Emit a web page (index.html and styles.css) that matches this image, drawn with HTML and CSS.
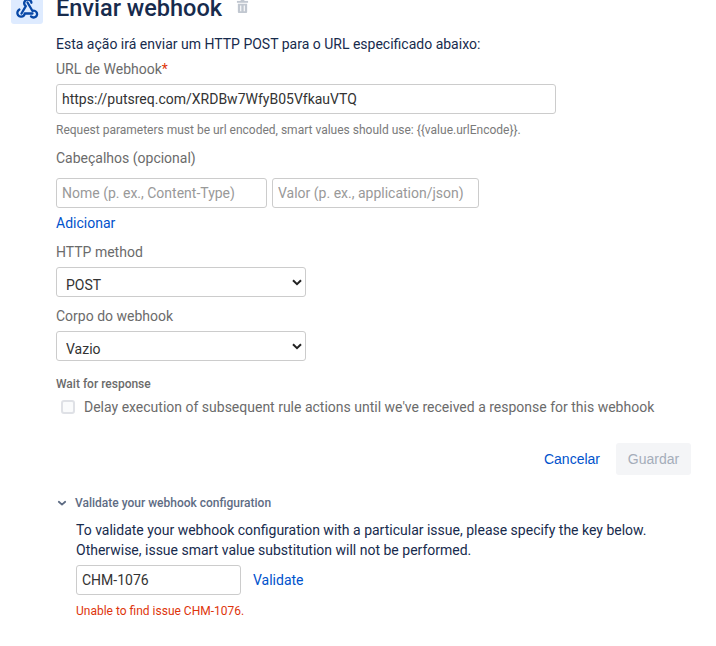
FILE: index.html

```html
<!DOCTYPE html>
<html lang="pt">
<head>
  <meta charset="UTF-8" />
  <title>Enviar webhook</title>
  <link rel="stylesheet" href="styles.css">
</head>
<body>
  <div class="page">
    <header class="title-row">
      <div class="icon-box">
        <svg width="24" height="24" viewBox="0 0 24 24" fill="none" stroke="#0747a6" stroke-width="2.3" stroke-linecap="round" stroke-linejoin="round">
          <path d="M6.500 17.500 10.800 10.200C9.200 8.800 8.800 6.600 10 5c1.400-1.800 4.200-1.900 5.600-.2.500.6.800 1.300.8 2"/>
          <path d="M12.500 6.500 17.500 15c1.600-.6 3.600.1 4.300 1.700.9 2-.3 4.300-2.400 4.700-1.300.3-2.500-.1-3.400-1"/>
          <path d="M17.500 17.500H9.800c-.4 1.800-2 3.300-4 3.100C3.600 20.400 2 18.500 2.400 16.300c.2-1.200 1-2.200 2-2.800"/>
        </svg>
      </div>
      <h1>Enviar webhook</h1>
      <svg class="trash" width="13" height="15" viewBox="0 0 14 16" fill="#c1c7d0">
        <rect x="1" y="2" width="12" height="2"/>
        <rect x="5" y="0.500" width="4" height="2"/>
        <path d="M2 5h10v9a1 1 0 0 1-1 1H3a1 1 0 0 1-1-1zM4.500 7v6h1.200V7zm3.800 0v6h1.200V7z" fill-rule="evenodd"/>
      </svg>
    </header>

    <form class="form">
      <p class="intro">Esta ação irá enviar um HTTP POST para o URL especificado abaixo:</p>

      <label class="label url-label">URL de Webhook<span class="req">*</span></label>
      <input class="input url-input" type="text" value="https://putsreq.com/XRDBw7WfyB05VfkauVTQ">
      <p class="hint">Request parameters must be url encoded, smart values should use: {{value.urlEncode}}.</p>

      <label class="label headers-label">Cabeçalhos (opcional)</label>
      <div class="headers-row">
        <input class="input name-input" type="text" placeholder="Nome (p. ex., Content-Type)">
        <input class="input value-input" type="text" placeholder="Valor (p. ex., application/json)">
      </div>
      <a class="link add-link" href="#">Adicionar</a>

      <label class="label method-label">HTTP method</label>
      <div class="select-wrap">
        <select class="select">
          <option>POST</option>
        </select>
        <svg class="chevron" width="10" height="7" viewBox="0 0 10 7" fill="none" stroke="#222" stroke-width="2">
          <path d="M1 1.200 5 5.200 9 1.200"/>
        </svg>
      </div>

      <label class="label body-label">Corpo do webhook</label>
      <div class="select-wrap">
        <select class="select">
          <option>Vazio</option>
        </select>
        <svg class="chevron" width="10" height="7" viewBox="0 0 10 7" fill="none" stroke="#222" stroke-width="2">
          <path d="M1 1.200 5 5.200 9 1.200"/>
        </svg>
      </div>

      <div class="small-title">Wait for response</div>
      <label class="check-row">
        <span class="check"></span>
        <span>Delay execution of subsequent rule actions until we've received a response for this webhook</span>
      </label>

      <div class="actions">
        <a class="cancel" href="#">Cancelar</a>
        <button class="save" type="button" disabled>Guardar</button>
      </div>
    </form>

    <section class="validate">
      <div class="validate-head">
        <svg width="12" height="12" viewBox="0 0 12 12" fill="none" stroke="#5e6c84" stroke-width="1.800" stroke-linecap="round" stroke-linejoin="round">
          <path d="M2.800 4.800 6 7.600l3.200-2.800"/>
        </svg>
        <span>Validate your webhook configuration</span>
      </div>
      <div class="validate-body">
        <p>To validate your webhook configuration with a particular issue, please specify the key below.<br>Otherwise, issue smart value substitution will not be performed.</p>
        <div class="validate-row">
          <input class="input key-input" type="text" value="CHM-1076">
          <a class="link" href="#">Validate</a>
        </div>
        <p class="error">Unable to find issue CHM-1076.</p>
      </div>
    </section>
  </div>
</body>
</html>
```

FILE: styles.css

```css
* { margin: 0; padding: 0; box-sizing: border-box; }

html, body {
  height: 646px;
  overflow: hidden;
}

body {
  font-family: Roboto, sans-serif;
  font-size: 14px;
  color: #172b4d;
  background: #fff;
}

.page {
  margin-top: -8px;
  padding-left: 11px;
  padding-right: 25px;
}

.title-row {
  display: flex;
  align-items: center;
  height: 32px;
}

.icon-box {
  width: 32px;
  height: 32px;
  background: #deebff;
  border-radius: 3px;
  display: flex;
  align-items: center;
  justify-content: center;
  margin-right: 13px;
}

.title-row h1 {
  font-size: 23.5px;
  font-weight: 500;
  line-height: 28px;
  color: #172b4d;
  margin-top: -1px;
}

.trash {
  margin-left: 14px;
  margin-top: -3px;
}

.form {
  padding-left: 45px;
}

.intro {
  margin-top: 10px;
  line-height: 20px;
}

.label {
  display: block;
  color: #6b6b6b;
  line-height: 20px;
}

.url-label { margin-top: 5px; }
.headers-label { margin-top: 10px; }
.method-label { margin-top: 9px; }
.body-label { margin-top: 9px; }

.req { color: #de350b; }

.input {
  display: block;
  height: 30px;
  font-family: Roboto, sans-serif;
  font-size: 14px;
  color: #333;
  border: 1px solid #ccc;
  border-radius: 3px;
  padding: 0 5px;
  outline: none;
  background: #fff;
}

.input::placeholder { color: #999; }

.url-input {
  width: 500px;
  margin-top: 5px;
}

.hint {
  margin-top: 8px;
  font-size: 12px;
  line-height: 16px;
  color: #7a7a7a;
}

.headers-row {
  display: flex;
  gap: 5px;
  margin-top: 10px;
}

.name-input { width: 211px; }
.value-input { width: 207px; }

.link {
  color: #0052cc;
  text-decoration: none;
  line-height: 20px;
}

.add-link {
  display: block;
  margin-top: 5px;
}

.select-wrap {
  position: relative;
  width: 250px;
  height: 30px;
  margin-top: 5px;
}

.select {
  display: block;
  width: 250px;
  height: 30px;
  appearance: none;
  font-family: Roboto, sans-serif;
  font-size: 14px;
  color: #333;
  background: #fff;
  border: 1px solid #ccc;
  border-radius: 3px;
  padding-left: 9px;
  padding-top: 6px;
}

.chevron {
  position: absolute;
  top: 12px;
  right: 4px;
  pointer-events: none;
}

.small-title {
  margin-top: 15px;
  font-size: 12px;
  font-weight: 500;
  line-height: 16px;
  color: #6b6b6b;
}

.check-row {
  display: flex;
  align-items: center;
  margin-top: 5px;
  padding-left: 5px;
  color: #6b6b6b;
  line-height: 20px;
}

.check {
  width: 14px;
  height: 14px;
  border: 2px solid #dfe1e6;
  border-radius: 3px;
  background: #fafbfc;
  margin-right: 9px;
  flex-shrink: 0;
}

.actions {
  display: flex;
  justify-content: flex-end;
  align-items: center;
  margin-top: 26px;
  gap: 16px;
}

.cancel {
  font-family: "Liberation Sans", sans-serif;
  color: #0052cc;
  text-decoration: none;
}

.save {
  width: 75px;
  height: 32px;
  border: none;
  border-radius: 3px;
  background: #f4f5f7;
  color: #a5adba;
  font-family: "Liberation Sans", sans-serif;
  font-size: 14px;
}

.validate {
  padding-left: 45px;
  margin-top: 20px;
}

.validate-head {
  display: flex;
  align-items: center;
  gap: 7px;
  font-size: 12px;
  font-weight: 500;
  line-height: 16px;
  color: #5e6c84;
}

.validate-body {
  padding-left: 20px;
  margin-top: 9px;
}

.validate-body p {
  line-height: 20px;
}

.validate-row {
  display: flex;
  align-items: center;
  gap: 12px;
  margin-top: 5px;
}

.key-input {
  width: 165px;
}

.validate-body .error {
  margin-top: 8px;
  font-size: 12px;
  line-height: 16px;
  color: #de350b;
}
```
